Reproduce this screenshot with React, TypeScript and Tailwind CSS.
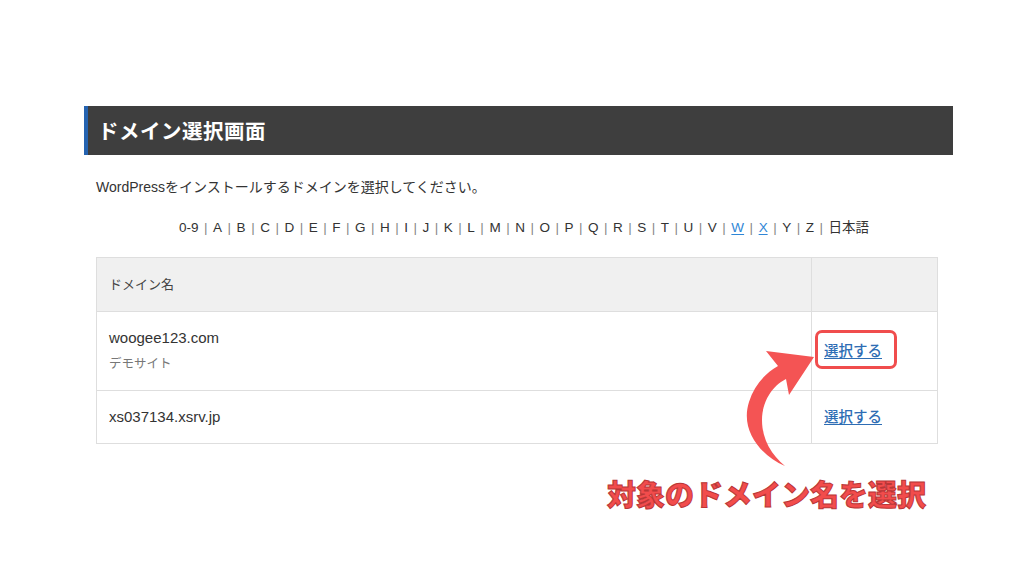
import React from 'react';

const letters = ['0-9', 'A', 'B', 'C', 'D', 'E', 'F', 'G', 'H', 'I', 'J', 'K', 'L', 'M', 'N', 'O', 'P', 'Q', 'R', 'S', 'T', 'U', 'V', 'W', 'X', 'Y', 'Z', '日本語'];
const linked = ['W', 'X'];

export default function App() {
  return (
    <div className="relative w-[1024px] h-[576px] overflow-hidden bg-white text-[#333] font-['Liberation_Sans','Noto_Sans_CJK_JP',sans-serif]">
      <div className="pt-[106px] pl-[84px] w-[953px]">
        {/* ページ見出し */}
        <div className="h-[49px] bg-[#3e3e3e] border-l-4 border-[#2563b0] flex items-center pl-[10px]">
          <h1 className="text-white text-[20.5px] font-bold tracking-[0.5px] font-['Noto_Sans_CJK_JP',sans-serif]">ドメイン選択画面</h1>
        </div>

        <div className="pl-[12px] pr-[15px]">
          <p className="mt-[23px] text-[14px] leading-[18px]">WordPressをインストールするドメインを選択してください。</p>

          {/* 頭文字ナビ */}
          <nav className="mt-[23px] flex justify-center pl-[14px] text-[13.5px] leading-[18px]">
            {letters.map((l, i) => (
              <span key={l} className="flex items-center">
                {i > 0 && <span className="mx-[5.5px] text-[#888]">|</span>}
                {linked.includes(l) ? (
                  <a className="text-[#2f86d6] underline underline-offset-2">{l}</a>
                ) : (
                  <span>{l}</span>
                )}
              </span>
            ))}
          </nav>

          <table className="mt-[20px] w-[842px] border-collapse table-fixed text-[15px]">
            <thead>
              <tr className="h-[54px] bg-[#f0f0f0]">
                <th className="w-[715px] border border-[#dedede] text-left font-normal pl-[12px] text-[13px] text-[#444]">ドメイン名</th>
                <th className="border border-[#dedede]"></th>
              </tr>
            </thead>
            <tbody>
              <tr className="h-[79px]">
                <td className="border border-[#dedede] pl-[12px] align-middle">
                  <div className="leading-[18px]">woogee123.com</div>
                  <div className="mt-[8px] text-[12.5px] leading-[18px] text-[#777]">デモサイト</div>
                </td>
                <td className="border border-[#dedede] pl-[12px]">
                  <a className="text-[#2e6db4] text-[14.5px] underline underline-offset-2 font-medium">選択する</a>
                </td>
              </tr>
              <tr className="h-[53px]">
                <td className="border border-[#dedede] pl-[12px]">xs037134.xsrv.jp</td>
                <td className="border border-[#dedede] pl-[12px]">
                  <a className="text-[#2e6db4] text-[14.5px] underline underline-offset-2 font-medium">選択する</a>
                </td>
              </tr>
            </tbody>
          </table>
        </div>
      </div>

      {/* 注釈 */}
      <div className="absolute left-[815px] top-[330px] w-[82px] h-[39px] rounded-[7px] border-[3px] border-[#f04d4d]"></div>
      <svg className="absolute left-0 top-0 pointer-events-none" width="1024" height="576" viewBox="0 0 1024 576">
        <path
          d="M 785 466 C 760 455, 740 430, 749 402 C 754 386, 764 374, 778 366 L 766 351 L 814 357 L 789 395 L 786 379 C 772 386, 762 402, 762 420 C 762 440, 772 455, 785 466 Z"
          fill="#f45454"
        />
      </svg>
      <div className="absolute left-[607px] top-[474px] text-[29px] leading-[38px] font-black text-[#f24c4c] [-webkit-text-stroke:1px_#b93636] font-['Noto_Sans_CJK_JP',sans-serif]">
        対象のドメイン名を選択
      </div>
    </div>
  );
}
